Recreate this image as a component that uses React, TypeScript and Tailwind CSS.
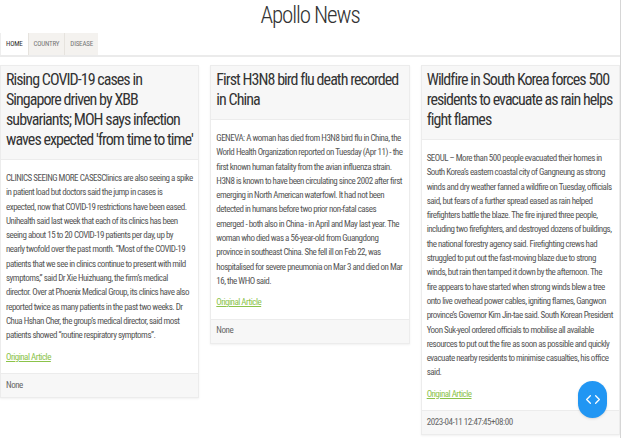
import { ChevronLeft, ChevronRight } from "lucide-react";

const font = "font-['Roboto_Condensed','Liberation_Sans_Narrow','DejaVu_Sans_Condensed',Roboto,sans-serif]";

type Article = {
  title: string[];
  body: string[];
  footer: string;
};

const articles: Article[] = [
  {
    title: [
      "Rising COVID-19 cases in",
      "Singapore driven by XBB",
      "subvariants; MOH says infection",
      "waves expected 'from time to time'",
    ],
    body: [
      "CLINICS SEEING MORE CASESClinics are also seeing a spike",
      "in patient load but doctors said the jump in cases is",
      "expected, now that COVID-19 restrictions have been eased.",
      "Unihealth said last week that each of its clinics has been",
      "seeing about 15 to 20 COVID-19 patients per day, up by",
      "nearly twofold over the past month. \u201cMost of the COVID-19",
      "patients that we see in clinics continue to present with mild",
      "symptoms,\u201d said Dr Xie Huizhuang, the firm\u2019s medical",
      "director. Over at Phoenix Medical Group, its clinics have also",
      "reported twice as many patients in the past two weeks. Dr",
      "Chua Hshan Cher, the group\u2019s medical director, said most",
      "patients showed \u201croutine respiratory symptoms\u201d.",
    ],
    footer: "None",
  },
  {
    title: ["First H3N8 bird flu death recorded", "in China"],
    body: [
      "GENEVA: A woman has died from H3N8 bird flu in China, the",
      "World Health Organization reported on Tuesday (Apr 11) - the",
      "first known human fatality from the avian influenza strain.",
      "H3N8 is known to have been circulating since 2002 after first",
      "emerging in North American waterfowl. It had not been",
      "detected in humans before two prior non-fatal cases",
      "emerged - both also in China - in April and May last year. The",
      "woman who died was a 56-year-old from Guangdong",
      "province in southeast China. She fell ill on Feb 22, was",
      "hospitalised for severe pneumonia on Mar 3 and died on Mar",
      "16, the WHO said.",
    ],
    footer: "None",
  },
  {
    title: [
      "Wildfire in South Korea forces 500",
      "residents to evacuate as rain helps",
      "fight flames",
    ],
    body: [
      "SEOUL \u2013 More than 500 people evacuated their homes in",
      "South Korea\u2019s eastern coastal city of Gangneung as strong",
      "winds and dry weather fanned a wildfire on Tuesday, officials",
      "said, but fears of a further spread eased as rain helped",
      "firefighters battle the blaze. The fire injured three people,",
      "including two firefighters, and destroyed dozens of buildings,",
      "the national forestry agency said. Firefighting crews had",
      "struggled to put out the fast-moving blaze due to strong",
      "winds, but rain then tamped it down by the afternoon. The",
      "fire appears to have started when strong winds blew a tree",
      "onto live overhead power cables, igniting flames, Gangwon",
      "province\u2019s Governor Kim Jin-tae said. South Korean President",
      "Yoon Suk-yeol ordered officials to mobilise all available",
      "resources to put out the fire as soon as possible and quickly",
      "evacuate nearby residents to minimise casualties, his office",
      "said.",
    ],
    footer: "2023-04-11 12:47:45+08:00",
  },
];

function NewsCard({ article }: { article: Article }) {
  return (
    <div className="flex flex-col border border-[#ececec] bg-white shadow-[0_1px_2px_rgba(0,0,0,0.06)]">
      <div className="bg-[#f7f7f7] border-b border-[#ececec] px-[5px] pt-[4px] pb-[9px] text-[16px] leading-[20px] tracking-[-0.95px] text-[#333]">
        {article.title.map((line) => (
          <span key={line} className="block whitespace-nowrap">
            {line}
          </span>
        ))}
      </div>
      <div className="px-[5px] pt-[11px] pb-[9px] text-[9px] leading-[14.3px] tracking-[-0.5px] text-[#555]">
        {article.body.map((line) => (
          <span key={line} className="block whitespace-nowrap">
            {line}
          </span>
        ))}
        <a href="#" className="mt-[7px] block text-[#8bc34a] underline">
          Original Article
        </a>
      </div>
      <div className="flex h-[24px] items-center border-t border-[#ececec] bg-[#f7f7f7] px-[5px] text-[9px] tracking-[-0.45px] text-[#666]">
        {article.footer}
      </div>
    </div>
  );
}

export default function App() {
  const tabs = ["HOME", "COUNTRY", "DISEASE"];

  return (
    <div className={`relative flex h-[438px] w-[624px] overflow-hidden bg-white ${font}`}>
      <div className="w-[620px]">
        <div className="flex h-[33px] items-center justify-center text-[23px] font-light tracking-[-1.1px] text-[#333]">
          Apollo News
        </div>
        <div className="flex h-[24px] border-b-2 border-[#ebebeb] text-[7px] tracking-[-0.2px]">
          {tabs.map((tab, i) => (
            <div
              key={tab}
              className={
                i === 0
                  ? "flex items-center px-[5px] bg-white text-[#333] border-l border-[#eee]"
                  : "flex items-center px-[5px] bg-[#f4f2ef] text-[#777] border-l border-[#e6e3de]"
              }
            >
              {tab}
            </div>
          ))}
        </div>
        <div className="mt-[8px] grid grid-cols-3 items-start gap-[11px]">
          {articles.map((a) => (
            <NewsCard key={a.title[0]} article={a} />
          ))}
        </div>
      </div>
      <div className="w-[4px] border-l border-[#d6d6d6] bg-white" />

      <button
        type="button"
        className="absolute left-[578px] top-[381px] flex h-[37px] w-[29px] items-center justify-center rounded-full bg-[#2196f3] text-white shadow"
      >
        <ChevronLeft size={15} strokeWidth={2} className="-mr-[3px]" />
        <ChevronRight size={15} strokeWidth={2} className="-ml-[3px]" />
      </button>
    </div>
  );
}
